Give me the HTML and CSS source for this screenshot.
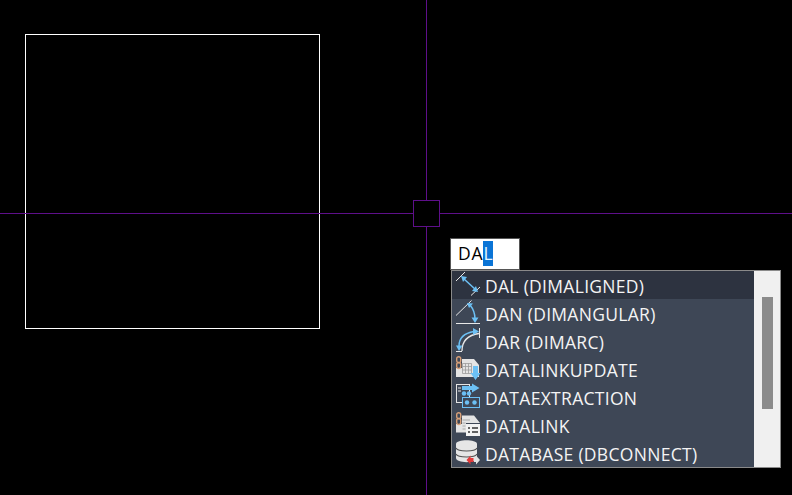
FILE: index.html
```html
<!DOCTYPE html>
<html lang="en">
<head>
<meta charset="utf-8">
<title>Command autocomplete</title>
<link rel="stylesheet" href="styles.css">
</head>
<body>
<main class="canvas">
  <div class="rect"></div>
  <div class="cross-v"></div>
  <div class="cross-h"></div>
  <div class="pickbox"></div>
  <div class="cmd-input"><span>DA</span><span class="sel">L</span></div>
  <div class="menu">
    <ul class="list">
      <li class="item active">
        <svg class="ico" viewBox="0 0 24 24" fill="none"><path d="M0 9 9 0M15 23.500 24 15" stroke="#e8e8e8"/><path d="M7 6 20 18" stroke="#6cc0f4" stroke-width="1.500"/><path d="M5 4 11 5 7 10ZM22 20 16 19 20 14Z" fill="#6cc0f4"/></svg>
        <span>DAL (DIMALIGNED)</span>
      </li>
      <li class="item">
        <svg class="ico" viewBox="0 0 24 24" fill="none"><path d="M0 15.500 15.500 .5M0 23.500H24" stroke="#e8e8e8"/><path d="M14 5Q19 11 19 19" stroke="#6cc0f4" stroke-width="1.500"/><path d="M11 3 17 3.500 13 8ZM19 23 15.500 17.500H22.500Z" fill="#6cc0f4"/></svg>
        <span>DAN (DIMANGULAR)</span>
      </li>
      <li class="item">
        <svg class="ico" viewBox="0 0 24 24" fill="none"><path d="M6 23Q6 8 23 5.500" stroke="#e8e8e8" stroke-width="1.300"/><path d="M3 18Q3 6 18 3.500" stroke="#6cc0f4" stroke-width="1.500"/><path d="M23.500 0V10" stroke="#e8e8e8"/><path d="M17 0 23 3.500 17 7ZM0 17.500H6.500L3 23Z" fill="#6cc0f4"/><path d="M0 23.500H6" stroke="#e8e8e8"/></svg>
        <span>DAR (DIMARC)</span>
      </li>
      <li class="item">
        <svg class="ico" viewBox="0 0 24 24" fill="none"><path d="M9 3H18L23 9V21H0V12H6V3Z" fill="#e4e4e4"/><path d="M6.500 7.500H15.500V17.500H6.500ZM6.500 10.500H15.500M6.500 14H15.500M9.500 7.500V17.500M12.500 7.500V17.500" stroke="#9a9a9a" stroke-width=".8"/><rect x=".7" y=".7" width="4" height="6" rx="2" stroke="#d8a078" stroke-width="1.400"/><rect x=".7" y="6.500" width="4" height="6" rx="2" stroke="#d8a078" stroke-width="1.400"/><path d="M17 10H22V17H24.500L19.500 24 14.500 17H17Z" fill="#6cc0f4"/></svg>
        <span>DATALINKUPDATE</span>
      </li>
      <li class="item">
        <svg class="ico" viewBox="0 0 24 24" fill="none"><rect x=".5" y=".5" width="13" height="18" stroke="#e4e4e4"/><path d="M2 4H5M2 7H5" stroke="#e4e4e4"/><path d="M6 2H16V-.5L23.500 4 16 8.500V6H6Z" fill="#6cc0f4"/><circle cx="8" cy="9.500" r="2.200" fill="#6cc0f4"/><circle cx="13" cy="9.500" r="2.200" fill="#6cc0f4"/><rect x="6.500" y="13.500" width="17" height="10" fill="#3e4756" stroke="#6cc0f4"/><circle cx="11" cy="18.500" r="2.200" fill="#6cc0f4"/><circle cx="18.500" cy="18.500" r="2.200" fill="#6cc0f4"/></svg>
        <span>DATAEXTRACTION</span>
      </li>
      <li class="item">
        <svg class="ico" viewBox="0 0 24 24" fill="none"><path d="M9 3.500H18L24 11H10V20.500H0V12H6V3.500Z" fill="#e4e4e4"/><path d="M6.500 8H14M6.500 11H9.500M6.500 14H9.500M6.500 17H9.500" stroke="#9a9a9a" stroke-width=".8"/><rect x=".7" y=".7" width="4" height="6" rx="2" stroke="#d8a078" stroke-width="1.400"/><rect x=".7" y="6.500" width="4" height="6" rx="2" stroke="#d8a078" stroke-width="1.400"/><rect x="10" y="12" width="14" height="12" fill="#f2f2f2"/><path d="M12 16H14M16 16H22M12 20H14M16 20H22" stroke="#333" stroke-width="1.300"/></svg>
        <span>DATALINK</span>
      </li>
      <li class="item">
        <svg class="ico" viewBox="0 0 24 24" fill="none"><path d="M0 4C0 -1 21 -1 21 4V18C21 23.500 0 23.500 0 18Z" fill="#e6e6e6"/><path d="M0 8C2 12 19 12 21 8M0 14C2 18 19 18 21 14" stroke="#555" stroke-width="1.200"/><path d="M10.500 20 14.500 15.500V18H17.500V22H14.500V24.500Z" fill="#e23b3b"/><path d="M24 20 20 15.500V18H18V22H20V24.500Z" fill="#e4e4e4"/></svg>
        <span>DATABASE (DBCONNECT)</span>
      </li>
    </ul>
    <div class="scrollbar"><div class="thumb"></div></div>
  </div>
</main>
</body>
</html>
```

FILE: styles.css
```css
* {
  box-sizing: border-box;
}

html,
body {
  margin: 0;
  height: 100%;
  overflow: hidden;
  background: #000;
}

.canvas {
  position: relative;
  width: 792px;
  height: 495px;
  background: #000;
  overflow: hidden;
  font-family: "Open Sans", "Liberation Sans", sans-serif;
}

.rect {
  position: absolute;
  left: 25px;
  top: 34px;
  width: 295px;
  height: 295px;
  border: 1px solid #fff;
}

.cross-v {
  position: absolute;
  left: 426px;
  top: 0;
  width: 1px;
  height: 495px;
  background: #5e0f8a;
}

.cross-h {
  position: absolute;
  left: 0;
  top: 213px;
  width: 792px;
  height: 1px;
  background: #5e0f8a;
}

.pickbox {
  position: absolute;
  left: 413px;
  top: 200px;
  width: 27px;
  height: 27px;
  border: 1px solid #5e0f8a;
  background: #000;
}

.cmd-input {
  position: absolute;
  left: 450px;
  top: 238px;
  width: 70px;
  height: 32px;
  padding: 2px 0 0 7px;
  background: #fff;
  border: 1px solid #555;
  color: #000;
  font-size: 17.5px;
  letter-spacing: 0.8px;
  line-height: 25px;
  white-space: nowrap;
}

.sel {
  display: inline-block;
  background: #0a74d6;
  color: #e6f6ff;
}

.menu {
  position: absolute;
  left: 451px;
  top: 270px;
  width: 330px;
  height: 198px;
  display: flex;
  background: #3e4756;
  border: 1px solid #8a8a8a;
}

.list {
  flex: 1;
  margin: 0;
  padding: 0;
  list-style: none;
}

.item {
  display: flex;
  align-items: flex-start;
  gap: 5px;
  height: 28px;
  padding: 1px 0 0 4px;
  color: #f4f4f4;
  font-size: 17.5px;
  letter-spacing: 0.3px;
  line-height: 29px;
  white-space: nowrap;
}

.item.active {
  background: #2d3340;
}

.ico {
  flex: none;
  width: 24px;
  height: 24px;
  overflow: visible;
}

.scrollbar {
  flex: none;
  width: 26px;
  padding: 26px 7px 0 8px;
  background: #f0f0f0;
}

.thumb {
  height: 112px;
  background: #8b8b8b;
}
```
